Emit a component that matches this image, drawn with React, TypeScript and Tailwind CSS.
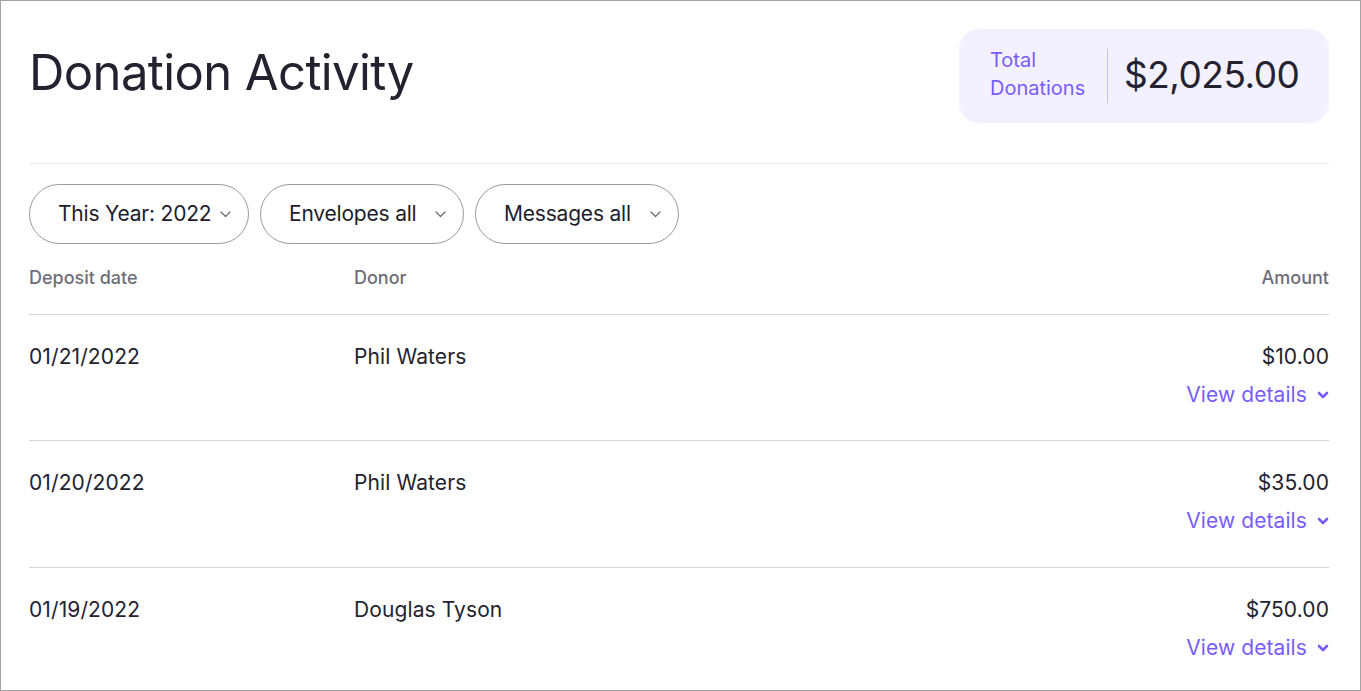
import React from "react";

const font = { fontFamily: "Inter, 'Noto Sans', sans-serif" };

function SmallChevron() {
  return (
    <svg width="11" height="7" viewBox="0 0 11 7" fill="none" className="shrink-0">
      <path d="M1 1l4.5 4.5L10 1" stroke="#6b6b75" strokeWidth="1.2" strokeLinecap="round" strokeLinejoin="round" />
    </svg>
  );
}

function BoldChevron() {
  return (
    <svg width="12" height="8" viewBox="0 0 12 8" fill="none" className="shrink-0">
      <path d="M2 2l4 4 4-4" stroke="#7a5cfa" strokeWidth="2.6" strokeLinecap="round" strokeLinejoin="round" />
    </svg>
  );
}

function Pill({ label, w }: { label: string; w: string }) {
  return (
    <button className={`h-[60px] rounded-full border border-[#9a9aa0] pl-[28px] pr-[17px] flex items-center justify-between text-[21px] text-[#1f1d2b] tracking-[-0.2px] ${w}`}>
      <span className="-mt-[1px]">{label}</span>
      <SmallChevron />
    </button>
  );
}

const rows = [
  { date: "01/21/2022", donor: "Phil Waters", amount: "$10.00", h: "h-[126px]" },
  { date: "01/20/2022", donor: "Phil Waters", amount: "$35.00", h: "h-[127px]" },
  { date: "01/19/2022", donor: "Douglas Tyson", amount: "$750.00", h: "h-[127px]" },
];

export default function App() {
  return (
    <div style={font} className="w-[1361px] h-[691px] border border-[#a3a3a3] bg-white overflow-hidden">
      <div className="pl-[28px] pr-[31px] pt-[28px]">
        <div className="flex items-center justify-between h-[94px]">
          <h1 className="text-[49px] text-[#24222f] font-normal tracking-[-0.6px] leading-none -mt-[7px]">Donation Activity</h1>
          <div className="h-[94px] w-[370px] rounded-[20px] bg-[#f3f1ff] flex items-center pl-[31px]">
            <div className="text-[20px] leading-[28px] text-[#7a5cfa] w-[117px] -mt-[4px]">
              Total
              <br />
              Donations
            </div>
            <div className="w-px h-[54px] bg-[#c9c1f2] mr-[16px]" />
            <div className="text-[37px] text-[#24222f] tracking-[-0.5px] -mt-[2px]">$2,025.00</div>
          </div>
        </div>
        <div className="h-px bg-[#ececec] mt-[40px]" />
        <div className="flex gap-[11px] mt-[20px]">
          <Pill label="This Year: 2022" w="w-[220px]" />
          <Pill label="Envelopes all" w="w-[204px]" />
          <Pill label="Messages all" w="w-[204px]" />
        </div>
        <div className="grid grid-cols-[325px_1fr_auto] h-[71px] items-center pb-[4px] text-[18px] font-medium text-[#6f6d78] border-b border-[#d4d3da]">
          <div>Deposit date</div>
          <div>Donor</div>
          <div className="text-right">Amount</div>
        </div>
        {rows.map((r) => (
          <div key={r.date} className={`grid grid-cols-[325px_1fr_auto] ${r.h} border-b border-[#d4d3da] text-[21px] tracking-[0.1px] text-[#24222f] pt-[28px]`}>
            <div className="leading-[28px]">{r.date}</div>
            <div className="leading-[28px]">{r.donor}</div>
            <div className="flex flex-col items-end">
              <div className="leading-[28px]">{r.amount}</div>
              <div className="flex items-center gap-[10px] text-[#7a5cfa] leading-[28px] mt-[10px]">
                View details
                <BoldChevron />
              </div>
            </div>
          </div>
        ))}
      </div>
    </div>
  );
}
